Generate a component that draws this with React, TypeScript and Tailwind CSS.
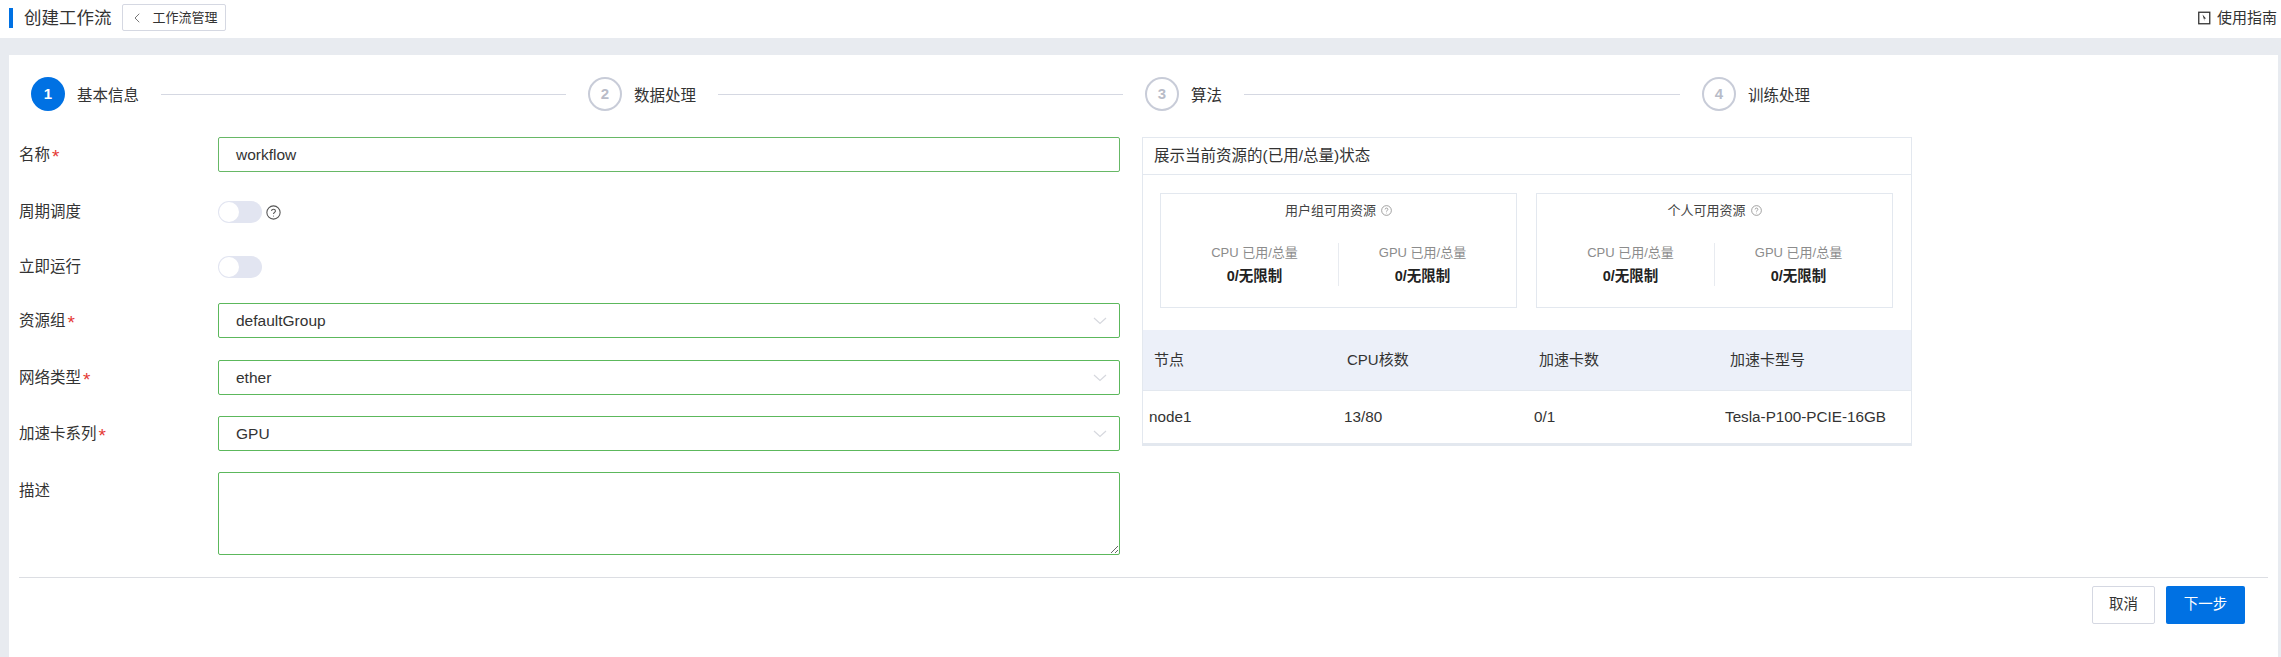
import React from 'react'
import { ChevronLeft } from 'lucide-react'

const steps = ['基本信息', '数据处理', '算法', '训练处理']

const HelpIcon = ({ size = 14, color = '#555' }: { size?: number; color?: string }) => (
  <svg width={size} height={size} viewBox="0 0 14 14" fill="none" stroke={color} strokeWidth="1">
    <circle cx="7" cy="7" r="6.2" />
    <path d="M5.2 5.6c0-1 .8-1.7 1.8-1.7s1.8.7 1.8 1.6c0 1.3-1.8 1.4-1.8 2.9" />
    <circle cx="7" cy="10.2" r=".5" fill={color} stroke="none" />
  </svg>
)

const Label = ({ text, required }: { text: string; required?: boolean }) => (
  <div className="flex w-[199px] shrink-0 items-center text-[15.5px] text-[#333]">
    {text}
    {required && <span className="ml-[2px] mt-[3px] text-[19px] leading-[19px] text-[#e53935]">*</span>}
  </div>
)

const Select = ({ value }: { value: string }) => (
  <div className="flex h-[35px] w-[902px] items-center justify-between rounded-[2px] border border-[#5cb85c] pl-[17px] pr-[12px] text-[15.5px] text-[#333]">
    <span>{value}</span>
    <svg width="14" height="8" viewBox="0 0 14 8" fill="none" stroke="#d6d8de" strokeWidth="1.2">
      <path d="M1 1l6 5.5L13 1" />
    </svg>
  </div>
)

const Toggle = () => (
  <div className="flex h-[22px] w-[44px] items-center rounded-full bg-[#e2e5f1] p-[1px]">
    <div className="h-[20px] w-[20px] rounded-full bg-white" />
  </div>
)

const ResourceCard = ({ title }: { title: string }) => (
  <div className="flex h-[115px] w-[357px] flex-col border border-[#e3e8ef]">
    <div className="mt-[7px] flex items-center justify-center gap-[5px] text-[13px] text-[#444]">
      {title}
      <HelpIcon size={11} color="#888" />
    </div>
    <div className="mt-[22px] flex px-[10px]">
      {['CPU', 'GPU'].map((name, i) => (
        <div key={name} className={`flex h-[43px] flex-1 flex-col items-center ${i === 0 ? 'border-r border-[#e8ebf0]' : ''}`}>
          <span className="text-[13px] leading-[20px] text-[#8c8c8c]">{name} 已用/总量</span>
          <span className="mt-[3px] text-[14.5px] font-bold leading-[20px] text-[#222]">0/无限制</span>
        </div>
      ))}
    </div>
  </div>
)

export default function App() {
  return (
    <div className="flex h-screen flex-col overflow-hidden bg-[#e8ebf0] font-['Liberation_Sans','Noto_Sans_CJK_SC',sans-serif]">
      {/* Header */}
      <div className="flex h-[38px] shrink-0 items-start bg-white pl-[9px] pr-[4px]">
        <div className="mt-[8px] h-[20px] w-[4px] bg-[#0071e3]" />
        <h1 className="ml-[11px] mt-[6px] text-[17.5px] leading-[24px] text-[#333]">创建工作流</h1>
        <div className="ml-[10px] mt-[4px] flex h-[27px] w-[104px] items-center rounded-[2px] border border-[#d5d8e2] pl-[6px] text-[13px] text-[#333]">
          <ChevronLeft className="h-[16px] w-[16px] text-[#555]" strokeWidth={1.2} />
          <span className="ml-[8px]">工作流管理</span>
        </div>
        <div className="ml-auto mt-[8px] flex items-center gap-[6px] text-[15px] leading-[20px] text-[#333]">
          <svg width="13" height="14" viewBox="0 0 13 14" fill="none">
            <rect x=".75" y="1.25" width="11" height="11.5" stroke="#333" strokeWidth="1.3" />
            <path d="M4.5 3.5l3.5 4-1.8.2.3 2.6z" fill="#333" />
          </svg>
          使用指南
        </div>
      </div>

      {/* Body */}
      <div className="mt-[17px] mr-[3px] ml-[9px] flex-1 bg-white">
        {/* Steps */}
        <div className="ml-[22px] mt-[22px] flex h-[34px]">
          {steps.map((step, i) => (
            <div key={step} className={`flex items-center ${i < 3 ? 'w-[557px]' : ''}`}>
              <div
                className={`flex h-[34px] w-[34px] shrink-0 items-center justify-center rounded-full text-[15px] font-bold ${
                  i === 0 ? 'bg-[#0071e3] text-white' : 'border-2 border-[#c8ccd8] text-[#b8bcc8]'
                }`}
              >
                {i + 1}
              </div>
              <span className="ml-[12px] mt-[3px] shrink-0 text-[15.5px] text-[#333]">{step}</span>
              {i < 3 && <div className="mx-[22px] h-[1px] flex-1 bg-[#d5d8e2]" />}
            </div>
          ))}
        </div>

        <div className="ml-[10px] mt-[26px] flex items-start">
          {/* Form */}
          <div className="flex w-[1101px] flex-col">
            <div className="flex h-[35px] items-center">
              <Label text="名称" required />
              <div className="flex h-[35px] w-[902px] items-center rounded-[2px] border border-[#67b866] pl-[17px] text-[15.5px] text-[#333]">
                workflow
              </div>
            </div>
            <div className="mt-[29px] flex h-[22px] items-center">
              <Label text="周期调度" />
              <Toggle />
              <span className="ml-[4px]">
                <HelpIcon size={15} />
              </span>
            </div>
            <div className="mt-[33px] flex h-[22px] items-center">
              <Label text="立即运行" />
              <Toggle />
            </div>
            <div className="mt-[25px] flex items-center">
              <Label text="资源组" required />
              <Select value="defaultGroup" />
            </div>
            <div className="mt-[22px] flex items-center">
              <Label text="网络类型" required />
              <Select value="ether" />
            </div>
            <div className="mt-[21px] flex items-center">
              <Label text="加速卡系列" required />
              <Select value="GPU" />
            </div>
            <div className="mt-[21px] flex items-start">
              <div className="mt-[7px]">
                <Label text="描述" />
              </div>
              <textarea className="h-[83px] w-[902px] rounded-[2px] border border-[#5cb85c] outline-none" />
            </div>
          </div>

          {/* Resource panel */}
          <div className="ml-[22px] w-[770px] border border-[#e3e8ef] border-b-[2px]">
            <div className="flex h-[37px] items-center border-b border-[#e3e8ef] pl-[11px] text-[15.5px] text-[#333]">
              展示当前资源的(已用/总量)状态
            </div>
            <div className="mt-[18px] flex gap-[19px] pl-[17px]">
              <ResourceCard title="用户组可用资源" />
              <ResourceCard title="个人可用资源" />
            </div>
            <div className="mt-[22px] flex h-[61px] items-center border-b border-[#e3e8ef] bg-[#ecf0f9] text-[15px] text-[#333]">
              <span className="w-[194px] pl-[11px]">节点</span>
              <span className="w-[192px] pl-[10px]">CPU核数</span>
              <span className="w-[191px] pl-[10px]">加速卡数</span>
              <span className="pl-[10px]">加速卡型号</span>
            </div>
            <div className="flex h-[53px] items-center border-b border-[#e3e8ef] text-[15.25px] text-[#333]">
              <span className="w-[194px] pl-[6px]">node1</span>
              <span className="w-[191px] pl-[7px]">13/80</span>
              <span className="w-[191px] pl-[6px]">0/1</span>
              <span className="pl-[6px]">Tesla-P100-PCIE-16GB</span>
            </div>
          </div>
        </div>

        {/* Footer */}
        <div className="mx-[10px] mt-[22px] border-t border-[#dcdee3]" />
        <div className="mr-[33px] mt-[8px] flex justify-end gap-[11px]">
          <button className="h-[38px] w-[63px] rounded-[2px] border border-[#d5d8e2] bg-white text-[14.5px] text-[#333]">取消</button>
          <button className="h-[38px] w-[79px] rounded-[2px] bg-[#0071e3] text-[14.5px] text-white">下一步</button>
        </div>
      </div>
    </div>
  )
}
